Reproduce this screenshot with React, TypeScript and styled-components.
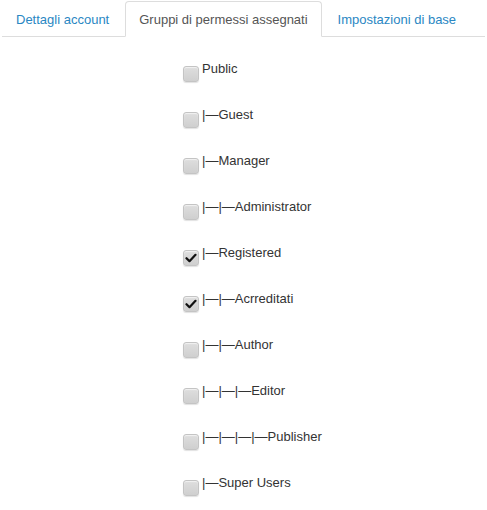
import React from "react";
import styled, { createGlobalStyle } from "styled-components";

const Global = createGlobalStyle`
  html, body { margin: 0; padding: 0; background: #fff; }
  body { font-family: "Liberation Sans", Arial, sans-serif; }
`;

const Page = styled.div`
  width: 487px;
`;

const Tabs = styled.ul`
  list-style: none;
  margin: 0 2px;
  padding: 1px 0 0 0;
  display: flex;
  border-bottom: 1px solid #dddddd;
`;

const TabItem = styled.li`
  margin: 0 2px -1px 0;
`;

const TabLink = styled.a<{ $active?: boolean }>`
  display: block;
  padding: 9px 13px 8px;
  font-size: 13px;
  line-height: 17px;
  text-decoration: none;
  border: 1px solid ${(p) => (p.$active ? "#dddddd" : "transparent")};
  border-bottom-color: ${(p) => (p.$active ? "#ffffff" : "transparent")};
  border-radius: 4px 4px 0 0;
  background: ${(p) => (p.$active ? "#ffffff" : "transparent")};
  color: ${(p) => (p.$active ? "#555555" : "#2a87c3")};
  cursor: pointer;
`;

const List = styled.ul`
  list-style: none;
  margin: 0;
  padding: 24px 0 0 183px;
`;

const Row = styled.li`
  display: flex;
  align-items: flex-start;
  height: 46px;
`;

const Box = styled.span`
  box-sizing: border-box;
  width: 16px;
  height: 16px;
  margin-top: 5px;
  margin-right: 3px;
  border: 1px solid #c4c4c4;
  border-radius: 3px;
  background: linear-gradient(#dedede, #cfcfcf);
  box-shadow: inset 0 1px 1px rgba(255, 255, 255, 0.6), 0 1px 1px rgba(0, 0, 0, 0.12);
  display: flex;
  align-items: center;
  justify-content: center;
  flex: none;
`;

const Label = styled.span`
  font-size: 13px;
  line-height: 15px;
  color: #333333;
  white-space: nowrap;
`;

const Check = () => (
  <svg width="12" height="10" viewBox="0 0 12 10">
    <path d="M1.5 5.2 L4.5 8.2 L10.5 1.8" fill="none" stroke="#111" strokeWidth="2.2" strokeLinecap="round" strokeLinejoin="round" />
  </svg>
);

const groups: { label: string; checked?: boolean }[] = [
  { label: "Public" },
  { label: "|—Guest" },
  { label: "|—Manager" },
  { label: "|—|—Administrator" },
  { label: "|—Registered", checked: true },
  { label: "|—|—Acrreditati", checked: true },
  { label: "|—|—Author" },
  { label: "|—|—|—Editor" },
  { label: "|—|—|—|—Publisher" },
  { label: "|—Super Users" },
];

export default function App() {
  return (
    <Page>
      <Global />
      <Tabs>
        <TabItem>
          <TabLink>Dettagli account</TabLink>
        </TabItem>
        <TabItem>
          <TabLink $active>Gruppi di permessi assegnati</TabLink>
        </TabItem>
        <TabItem>
          <TabLink>Impostazioni di base</TabLink>
        </TabItem>
      </Tabs>
      <List>
        {groups.map((g) => (
          <Row key={g.label}>
            <Box>{g.checked && <Check />}</Box>
            <Label>{g.label}</Label>
          </Row>
        ))}
      </List>
    </Page>
  );
}
